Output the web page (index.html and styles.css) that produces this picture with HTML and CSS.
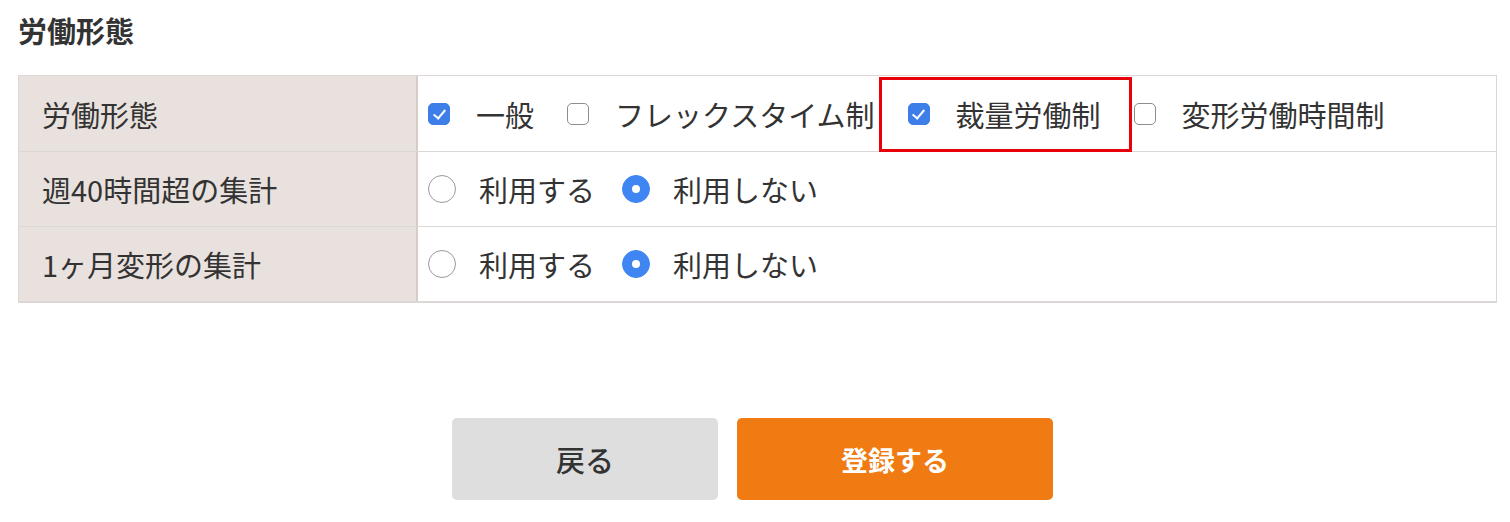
FILE: index.html
```html
<!DOCTYPE html>
<html lang="ja">
<head>
  <meta charset="UTF-8">
  <meta name="viewport" content="width=device-width, initial-scale=1">
  <title>労働形態</title>
  <link rel="stylesheet" href="styles.css">
</head>
<body>

  <section class="form-block">
    <h2 class="section-title">労働形態</h2>

    <div class="form-table">
      <div class="row">
        <div class="label">労働形態</div>
        <div class="field">
          <label class="opt"><span class="check on"></span>一般</label>
          <label class="opt"><span class="check"></span>フレックスタイム制</label>
          <label class="opt marked"><span class="check on"></span>裁量労働制</label>
          <label class="opt"><span class="check"></span>変形労働時間制</label>
        </div>
      </div>
      <div class="row">
        <div class="label">週40時間超の集計</div>
        <div class="field">
          <label class="opt"><span class="radio"></span>利用する</label>
          <label class="opt"><span class="radio on"></span>利用しない</label>
        </div>
      </div>
      <div class="row">
        <div class="label">1ヶ月変形の集計</div>
        <div class="field">
          <label class="opt"><span class="radio"></span>利用する</label>
          <label class="opt"><span class="radio on"></span>利用しない</label>
        </div>
      </div>
    </div>
  </section>

  <div class="actions">
    <button class="btn btn-back">戻る</button>
    <button class="btn btn-submit">登録する</button>
  </div>

</body>
</html>
```

FILE: styles.css
```css
* {
  margin: 0;
  padding: 0;
  box-sizing: border-box;
}

body {
  font-family: "Noto Sans CJK JP", "Noto Sans", sans-serif;
  color: #333;
  background: #fff;
  padding: 10px 13px 0 18px;
}

.section-title {
  font-size: 29px;
  font-weight: 700;
  line-height: 40px;
  color: #333;
  margin-bottom: 25px;
}

.form-table {
  border: 1px solid #dcd7d4;
  border-bottom-width: 2px;
}

.row {
  display: flex;
  height: 75px;
  border-top: 1px solid #dcd7d4;
}

.row:first-child {
  border-top: none;
}

.label {
  width: 399px;
  flex: 0 0 399px;
  background: #e9e1de;
  border-right: 2px solid #d6cdc9;
  display: flex;
  align-items: center;
  padding-left: 23px;
  font-size: 29px;
}

.field {
  flex: 1;
  display: flex;
  align-items: center;
  gap: 33px;
  padding-left: 10px;
  font-size: 29px;
  line-height: 40px;
}

.opt {
  display: flex;
  align-items: center;
  gap: 26px;
  position: relative;
  white-space: nowrap;
}

/* 赤枠の強調 */
.opt.marked::after {
  content: "";
  position: absolute;
  top: -17px;
  bottom: -18px;
  left: -29px;
  right: -31px;
  border: 3px solid #e8000b;
  pointer-events: none;
}

.check {
  width: 22px;
  height: 22px;
  border: 1.5px solid #8d8d8d;
  border-radius: 5px;
  background: #fff;
  display: inline-flex;
  align-items: center;
  justify-content: center;
}

.check.on {
  background: #3d7ee8;
  border-color: #3d7ee8;
}

.check.on::before {
  content: "";
  width: 5px;
  height: 10px;
  border: solid #fff;
  border-width: 0 2.5px 2.5px 0;
  transform: translateY(-1px) rotate(40deg);
}

.radio {
  width: 28px;
  height: 28px;
  border: 1.5px solid #9a9a9a;
  border-radius: 50%;
  background: #fff;
  margin-right: -3px;
  display: inline-flex;
  align-items: center;
  justify-content: center;
}

.radio.on {
  background: #3f86f2;
  border-color: #3f86f2;
}

.radio.on::before {
  content: "";
  width: 8px;
  height: 8px;
  border-radius: 50%;
  background: #fff;
}

.field .opt:has(.radio) + .opt {
  margin-left: -6px;
}

.actions {
  display: flex;
  justify-content: center;
  gap: 19px;
  margin-top: 115px;
  padding-right: 10px;
}

.btn {
  height: 82px;
  border: none;
  border-radius: 5px;
  font-family: "Noto Sans CJK JP", "Noto Sans", sans-serif;
  cursor: pointer;
}

.btn-back {
  width: 266px;
  background: #dedede;
  color: #333;
  font-size: 29px;
  font-weight: 500;
}

.btn-submit {
  width: 316px;
  background: #ef7b12;
  color: #fff;
  font-size: 27px;
  font-weight: 700;
}
```
